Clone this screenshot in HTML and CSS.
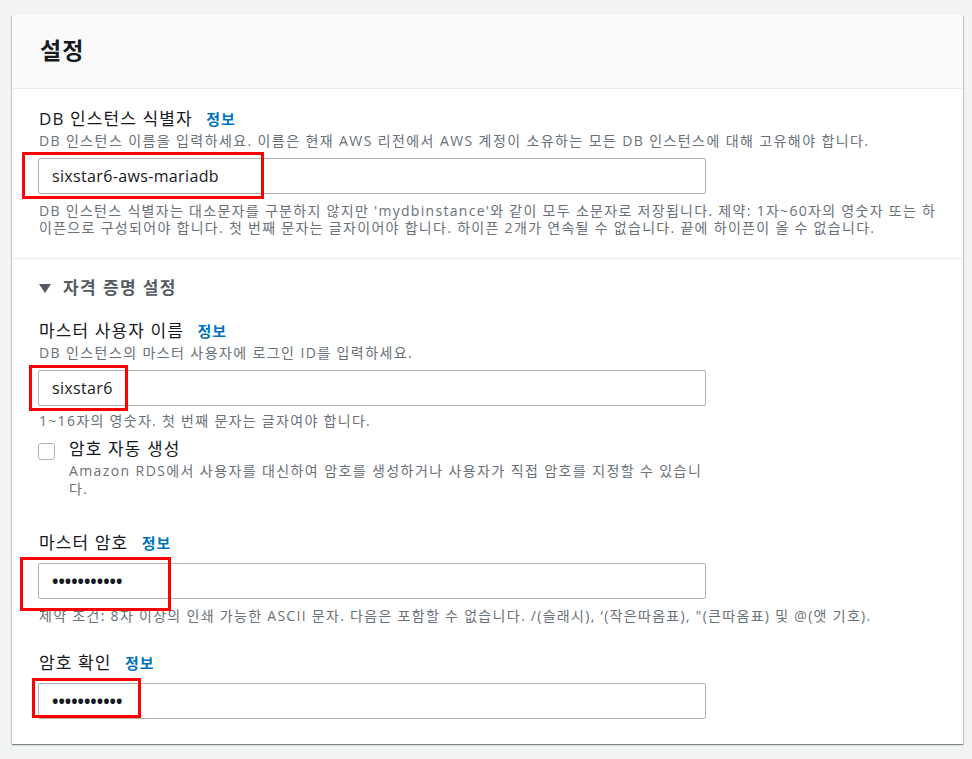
FILE: index.html
```html
<!DOCTYPE html>
<html lang="ko">

<head>
    <meta charset="UTF-8">
    <meta name="viewport" content="width=device-width, initial-scale=1.0">
    <title>설정</title>
    <link rel="stylesheet" href="styles.css">
</head>

<body>
    <div class="panel">
        <div class="panel-header">
            <h2>설정</h2>
        </div>

        <div class="section">
            <div class="field">
                <div class="label">DB 인스턴스 식별자 <a class="info" href="#">정보</a></div>
                <div class="desc">DB 인스턴스 이름을 입력하세요. 이름은 현재 AWS 리전에서 AWS 계정이 소유하는 모든 DB 인스턴스에 대해 고유해야 합니다.</div>
                <div class="control">
                    <input class="input" type="text" value="sixstar6-aws-mariadb">
                    <span class="mark mark-id"></span>
                </div>
                <div class="hint">DB 인스턴스 식별자는 대소문자를 구분하지 않지만 'mydbinstance'와 같이 모두 소문자로 저장됩니다. 제약: 1자~60자의 영숫자 또는 하이픈으로 구성되어야 합니다. 첫 번째 문자는 글자이어야 합니다. 하이픈 2개가 연속될 수 없습니다. 끝에 하이픈이 올 수 없습니다.</div>
            </div>
        </div>

        <div class="section section-last">
            <div class="expander">
                <span class="caret"></span>
                <span>자격 증명 설정</span>
            </div>

            <div class="field field-user">
                <div class="label">마스터 사용자 이름 <a class="info" href="#">정보</a></div>
                <div class="desc">DB 인스턴스의 마스터 사용자에 로그인 ID를 입력하세요.</div>
                <div class="control">
                    <input class="input" type="text" value="sixstar6">
                    <span class="mark mark-user"></span>
                </div>
                <div class="hint">1~16자의 영숫자. 첫 번째 문자는 글자여야 합니다.</div>
            </div>

            <label class="checkbox">
                <span class="box"></span>
                <span class="checkbox-text">
                    <span class="checkbox-label">암호 자동 생성</span>
                    <span class="checkbox-desc">Amazon RDS에서 사용자를 대신하여 암호를 생성하거나 사용자가 직접 암호를 지정할 수 있습니다.</span>
                </span>
            </label>

            <div class="field field-pass">
                <div class="label">마스터 암호 <a class="info" href="#">정보</a></div>
                <div class="control">
                    <input class="input password" type="password" value="12345678901">
                    <span class="mark mark-pass"></span>
                </div>
                <div class="hint">제약 조건: 8자 이상의 인쇄 가능한 ASCII 문자. 다음은 포함할 수 없습니다. /(슬래시), ‘(작은따옴표), "(큰따옴표) 및 @(앳 기호).</div>
            </div>

            <div class="field field-confirm">
                <div class="label">암호 확인 <a class="info" href="#">정보</a></div>
                <div class="control">
                    <input class="input password" type="password" value="12345678901">
                    <span class="mark mark-confirm"></span>
                </div>
            </div>
        </div>
    </div>
</body>

</html>
```

FILE: styles.css
```css
* {
    box-sizing: border-box;
}

body {
    margin: 0;
    padding: 15px 9px 14px 12px;
    background-color: #f2f3f3;
    font-family: "Open Sans", "Noto Sans CJK KR", sans-serif;
    color: #16191f;
}

.panel {
    width: 951px;
    background-color: #ffffff;
    box-shadow: 0 1px 1px 0 rgba(0, 28, 36, 0.3), 1px 1px 1px 0 rgba(0, 28, 36, 0.15), -1px 1px 1px 0 rgba(0, 28, 36, 0.15);
}

.panel-header {
    height: 74px;
    background-color: #fafafa;
    border-bottom: 1px solid #eaeded;
    padding: 19px 28px 0;
}

.panel-header h2 {
    margin: 0;
    font-size: 23px;
    line-height: 33px;
    font-weight: 700;
    letter-spacing: 1px;
}

.section {
    padding: 19px 26px 22px;
    border-bottom: 1px solid #eaeded;
}

.section-last {
    padding: 17px 26px 25px;
    border-bottom: none;
}

.label {
    font-size: 17px;
    line-height: 22px;
    letter-spacing: 1.1px;
    padding-left: 1px;
}

.info {
    margin-left: 8px;
    font-size: 15px;
    font-weight: 700;
    letter-spacing: 1px;
    color: #0073bb;
    text-decoration: none;
}

.desc {
    margin-top: 2px;
    font-size: 14px;
    line-height: 18px;
    letter-spacing: 1.4px;
    color: #687078;
    padding-left: 1px;
}

.control {
    position: relative;
    width: 668px;
    margin-top: 8px;
}

.input {
    display: block;
    width: 668px;
    height: 36px;
    margin: 0;
    padding: 0 13px;
    border: 1px solid #aab7b8;
    border-radius: 2px;
    background-color: #ffffff;
    font-family: "Open Sans", "Noto Sans CJK KR", sans-serif;
    font-size: 16px;
    letter-spacing: 0.35px;
    color: #16191f;
    outline: none;
}

.password {
    font-size: 17px;
    letter-spacing: 0;
    font-weight: 700;
}

.hint {
    margin-top: 8px;
    font-size: 14px;
    line-height: 17px;
    letter-spacing: 1.3px;
    color: #687078;
    padding-left: 1px;
}

.mark {
    position: absolute;
    border: 3px solid #ff0000;
    pointer-events: none;
}

.mark-id {
    left: -16px;
    top: -6px;
    width: 242px;
    height: 47px;
}

.mark-user {
    left: -9px;
    top: -5px;
    width: 99px;
    height: 46px;
}

.mark-pass {
    left: -18px;
    top: -6px;
    width: 151px;
    height: 54px;
}

.mark-confirm {
    left: -6px;
    top: -5px;
    width: 109px;
    height: 40px;
}

.expander {
    display: flex;
    align-items: center;
    gap: 12px;
    font-size: 17px;
    line-height: 24px;
    font-weight: 700;
    letter-spacing: 1.4px;
    color: #545b64;
}

.caret {
    width: 0;
    height: 0;
    margin-left: 1px;
    border-left: 6px solid transparent;
    border-right: 6px solid transparent;
    border-top: 9px solid #545b64;
}

.field-user {
    margin-top: 20px;
}

.field-user .hint {
    margin-top: 6px;
}

.checkbox {
    display: flex;
    gap: 14px;
    width: 668px;
    margin-top: 9px;
}

.box {
    flex: none;
    width: 17px;
    height: 17px;
    margin-top: 5px;
    border: 1px solid #aab7b8;
    border-radius: 3px;
    background-color: #ffffff;
}

.checkbox-text {
    display: flex;
    flex-direction: column;
}

.checkbox-label {
    font-size: 17px;
    line-height: 22px;
    letter-spacing: 1.1px;
}

.checkbox-desc {
    margin-top: 2px;
    font-size: 14px;
    line-height: 18px;
    letter-spacing: 1.4px;
    color: #687078;
}

.field-pass {
    margin-top: 34px;
}

.field-pass .control,
.field-confirm .control {
    margin-top: 9px;
}

.field-confirm {
    margin-top: 28px;
}
```
